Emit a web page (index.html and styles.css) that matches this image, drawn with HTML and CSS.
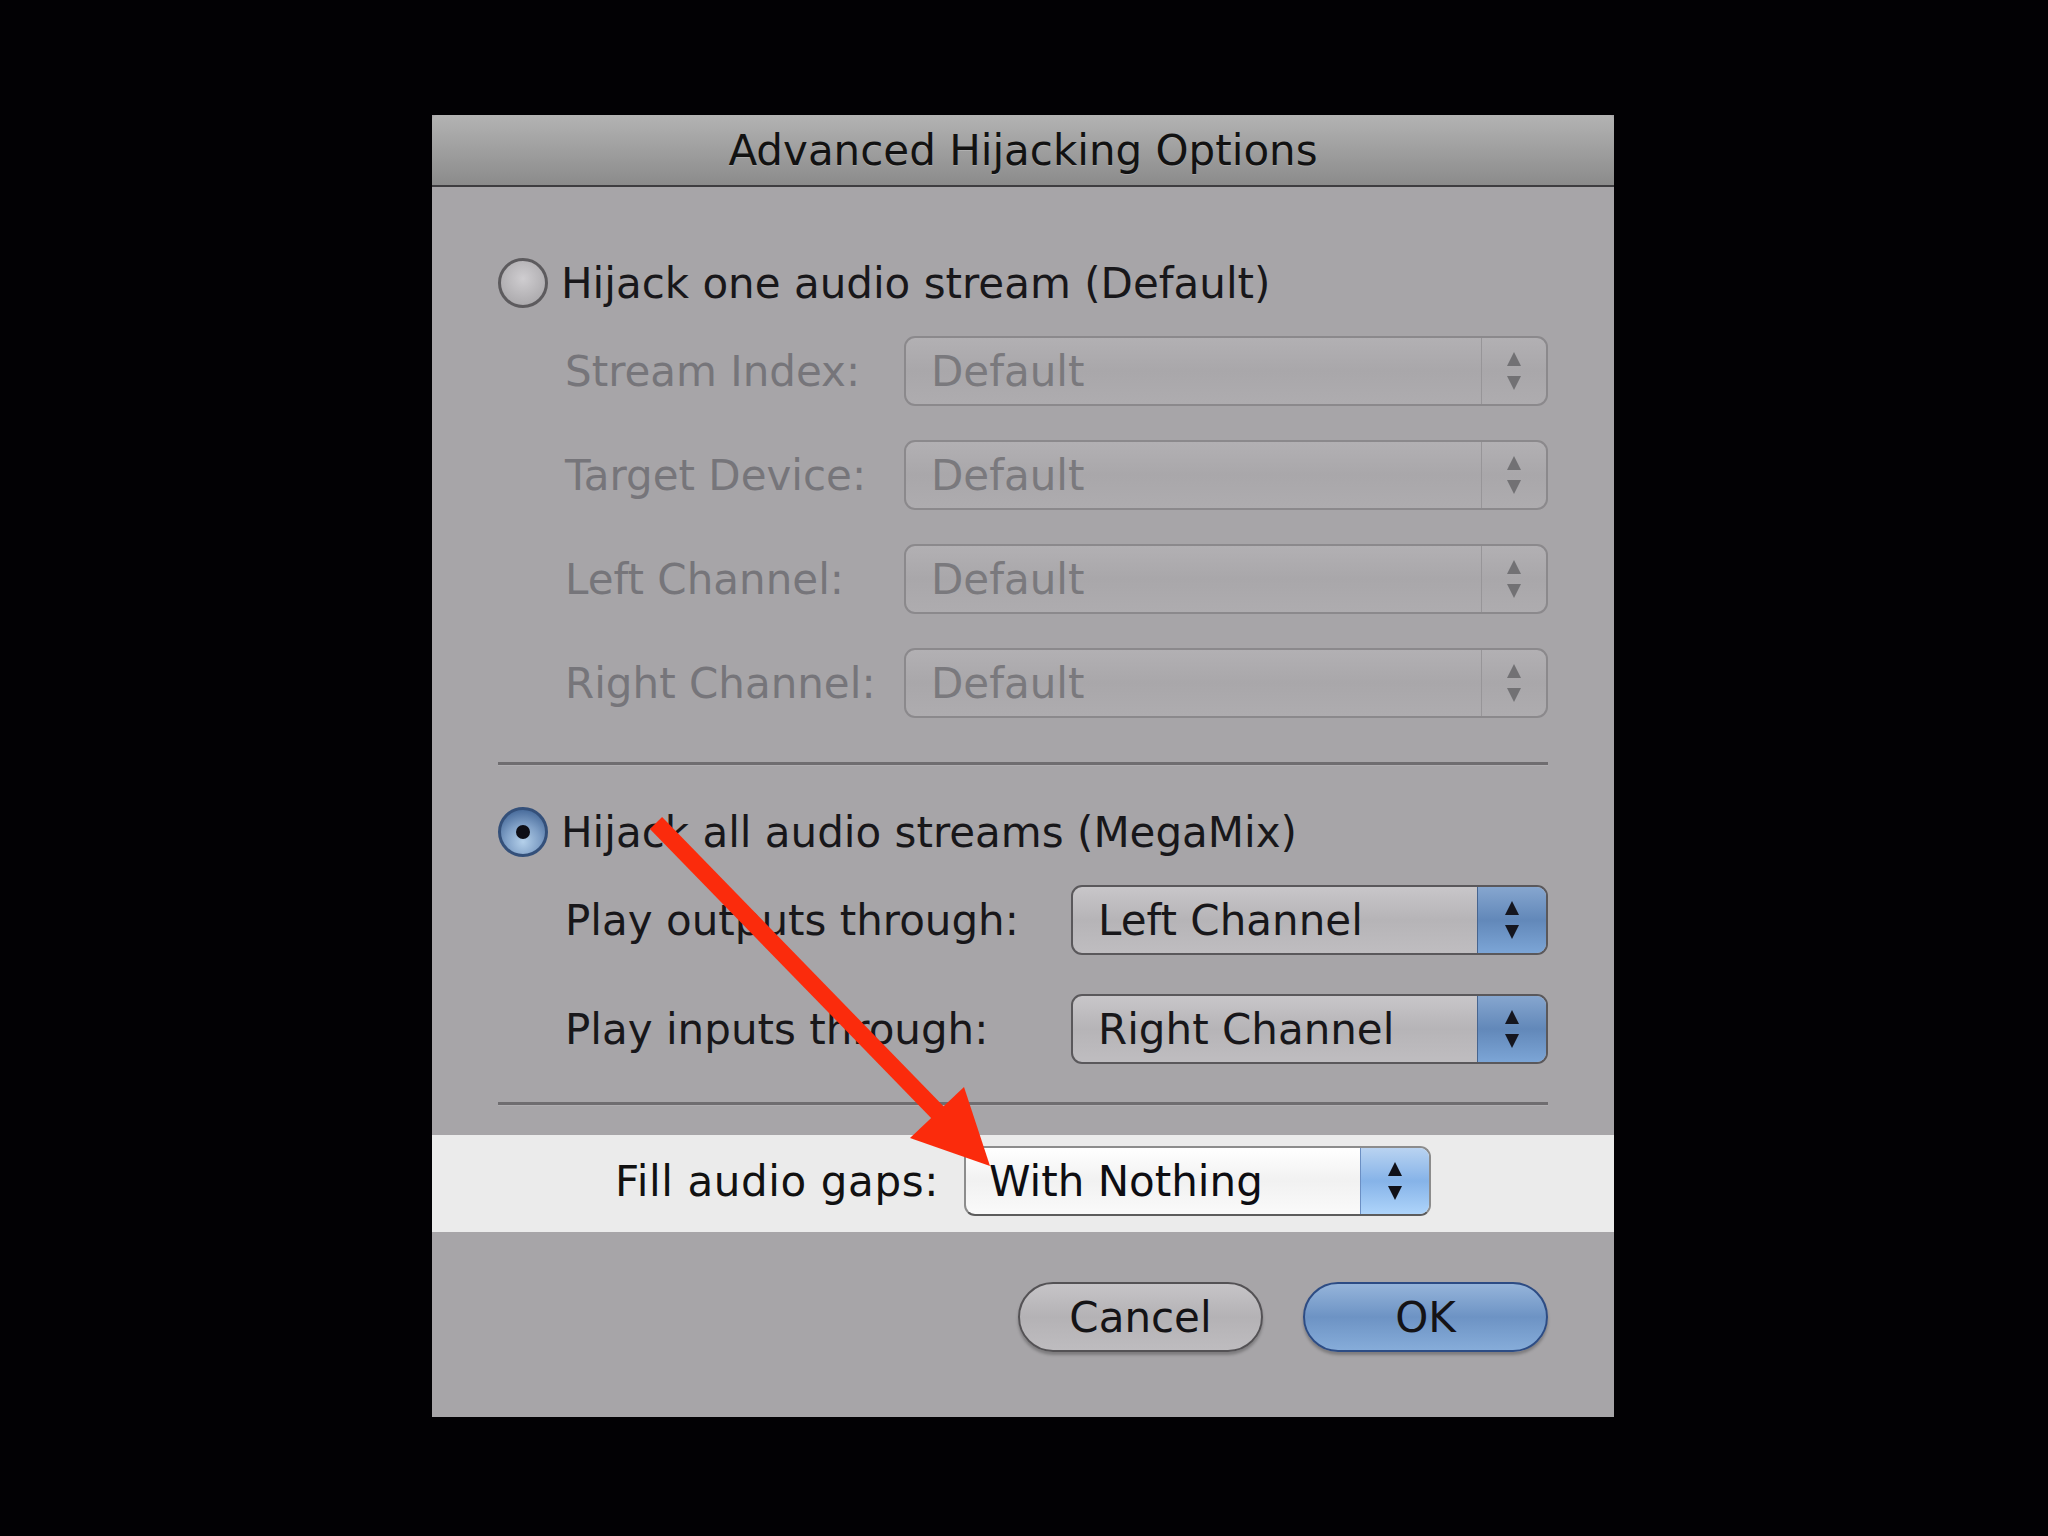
FILE: index.html
```html
<!DOCTYPE html>
<html lang="en">
<head>
    <meta charset="UTF-8">
    <title>Advanced Hijacking Options</title>
    <link rel="stylesheet" href="styles.css">
</head>
<body>
    <div class="dialog">
        <div class="titlebar">Advanced Hijacking Options</div>

        <div class="content">
            <div class="option">
                <span class="radio"></span>
                <span class="option-text">Hijack one audio stream (Default)</span>
            </div>

            <div class="fields fields-one">
                <label class="field-label disabled-text">Stream Index:</label>
                <div class="popup disabled">
                    <span class="popup-value">Default</span>
                    <span class="popup-arrows"><svg width="16" height="44" viewBox="0 0 16 44"><polygon points="8,3 15,17 1,17"/><polygon points="1,27 15,27 8,41"/></svg></span>
                </div>

                <label class="field-label disabled-text">Target Device:</label>
                <div class="popup disabled">
                    <span class="popup-value">Default</span>
                    <span class="popup-arrows"><svg width="16" height="44" viewBox="0 0 16 44"><polygon points="8,3 15,17 1,17"/><polygon points="1,27 15,27 8,41"/></svg></span>
                </div>

                <label class="field-label disabled-text">Left Channel:</label>
                <div class="popup disabled">
                    <span class="popup-value">Default</span>
                    <span class="popup-arrows"><svg width="16" height="44" viewBox="0 0 16 44"><polygon points="8,3 15,17 1,17"/><polygon points="1,27 15,27 8,41"/></svg></span>
                </div>

                <label class="field-label disabled-text">Right Channel:</label>
                <div class="popup disabled">
                    <span class="popup-value">Default</span>
                    <span class="popup-arrows"><svg width="16" height="44" viewBox="0 0 16 44"><polygon points="8,3 15,17 1,17"/><polygon points="1,27 15,27 8,41"/></svg></span>
                </div>
            </div>

            <div class="separator"></div>

            <div class="option option-two">
                <span class="radio checked"><span class="radio-dot"></span></span>
                <span class="option-text">Hijack all audio streams (MegaMix)</span>
            </div>

            <div class="fields fields-all">
                <label class="field-label">Play outputs through:</label>
                <div class="popup">
                    <span class="popup-value">Left Channel</span>
                    <span class="popup-arrows"><svg width="16" height="44" viewBox="0 0 16 44"><polygon points="8,3 15,17 1,17"/><polygon points="1,27 15,27 8,41"/></svg></span>
                </div>

                <label class="field-label">Play inputs through:</label>
                <div class="popup">
                    <span class="popup-value">Right Channel</span>
                    <span class="popup-arrows"><svg width="16" height="44" viewBox="0 0 16 44"><polygon points="8,3 15,17 1,17"/><polygon points="1,27 15,27 8,41"/></svg></span>
                </div>
            </div>

            <div class="separator separator-two"></div>
        </div>

        <!-- highlighted strip, not dimmed -->
        <div class="gaps-band">
            <label class="field-label gaps-label">Fill audio gaps:</label>
            <div class="popup bright">
                <span class="popup-value">With Nothing</span>
                <span class="popup-arrows"><svg width="16" height="44" viewBox="0 0 16 44"><polygon points="8,3 15,17 1,17"/><polygon points="1,27 15,27 8,41"/></svg></span>
            </div>
        </div>

        <div class="buttons">
            <button class="button cancel" type="button">Cancel</button>
            <button class="button ok" type="button">OK</button>
        </div>

        <!-- red annotation arrow drawn over the dialog -->
        <svg class="annotation" width="1182" height="1302" viewBox="0 0 1182 1302">
            <line x1="224" y1="708" x2="512" y2="1004" stroke="#fb2b0c" stroke-width="17"/>
            <polygon points="558,1051 532,972 478,1023" fill="#fb2b0c"/>
        </svg>
    </div>
</body>
</html>
```

FILE: styles.css
```css
body {
    margin: 0;
    padding: 0;
    background: #020104;
    font-family: "DejaVu Sans", "Liberation Sans", sans-serif;
    font-size: 42px;
    color: #18171a;
}

.dialog {
    position: relative;
    box-sizing: border-box;
    width: 1182px;
    height: 1302px;
    margin: 115px 0 0 432px;
    background: #a7a5a8;
}

.titlebar {
    height: 70px;
    border-bottom: 2px solid #3e3d40;
    background: linear-gradient(#b3b3b3, #a3a3a3 40%, #8b8b8b);
    border-radius: 5px 5px 0 0;
    display: flex;
    align-items: center;
    justify-content: center;
    color: #121212;
    text-shadow: 0 1px 0 rgba(255, 255, 255, 0.2);
}

.content {
    padding: 71px 66px 30px 66px;
}

.option {
    display: flex;
    align-items: center;
    gap: 13px;
    height: 50px;
}

.option-two {
    margin-top: 42px;
}

.radio {
    box-sizing: border-box;
    width: 50px;
    height: 50px;
    border-radius: 50%;
    border: 3px solid #5d5b5e;
    background: radial-gradient(circle at 50% 40%, #cfcdd0, #b4b2b5 60%, #a3a1a4);
    display: flex;
    align-items: center;
    justify-content: center;
}

.radio.checked {
    border-color: #34507a;
    background: radial-gradient(circle at 50% 72%, #b4d0ea, #7f9fc6 45%, #4d709f 80%, #3e6090);
}

.radio-dot {
    width: 14px;
    height: 14px;
    border-radius: 50%;
    background: #0e0e16;
}

.fields {
    display: grid;
    align-items: center;
    margin-top: 28px;
    padding-left: 67px;
}

.fields-one {
    grid-template-columns: 339px 1fr;
    row-gap: 34px;
}

.fields-all {
    grid-template-columns: 506px 1fr;
    row-gap: 39px;
}

.field-label {
    white-space: nowrap;
}

.disabled-text {
    color: #76757a;
}

.separator {
    height: 3px;
    margin-top: 44px;
    background: #6f6d70;
    box-shadow: 0 1px 0 #b0aeb1;
}

.separator-two {
    margin-top: 38px;
}

.popup {
    box-sizing: border-box;
    height: 70px;
    display: flex;
    align-items: stretch;
    border: 2px solid #5a585b;
    border-radius: 11px;
    background: linear-gradient(#c8c6c9, #b6b4b7 50%, #bfbdc0);
    color: #18171a;
    overflow: hidden;
}

.popup-value {
    flex: 1;
    display: flex;
    align-items: center;
    padding-left: 25px;
    white-space: nowrap;
}

.popup-arrows {
    width: 68px;
    display: flex;
    align-items: center;
    justify-content: center;
    border-left: 1px solid #46648f;
    background: linear-gradient(#86a6cf, #6288b9 50%, #7ca5d6);
}

.popup-arrows svg {
    fill: #15161f;
}

.popup.disabled {
    border-color: #8b898c;
    background: linear-gradient(#b2b0b3, #a9a7aa 50%, #aeacaf);
    color: #7a797d;
}

.popup.disabled .popup-arrows {
    width: 64px;
    border-left: 1px solid #979598;
    background: none;
}

.popup.disabled .popup-arrows svg {
    fill: #727174;
}

.gaps-band {
    height: 97px;
    box-sizing: border-box;
    padding: 11px 0 16px;
    background: #ebebeb;
    display: flex;
    align-items: center;
    justify-content: center;
    gap: 25px;
    color: #111;
}

.gaps-label {
    letter-spacing: 0.6px;
}

.popup.bright {
    width: 467px;
    border-color: #8c8c8c;
    border-bottom-color: #5c5c5c;
    background: linear-gradient(#ffffff, #f1f1f1 50%, #fafafa);
    color: #0d0d12;
}

.popup.bright .popup-value {
    padding-left: 23px;
}

.popup.bright .popup-arrows {
    width: 68px;
    border-left: 1px solid #6b8fc4;
    background: linear-gradient(#b9d3f1, #86b3e8 50%, #aed4fa);
}

.popup.bright .popup-arrows svg {
    fill: #0f1018;
}

.buttons {
    display: flex;
    justify-content: flex-end;
    gap: 40px;
    padding: 50px 66px 0 0;
}

.button {
    box-sizing: border-box;
    width: 245px;
    height: 70px;
    border-radius: 35px;
    font-family: "DejaVu Sans", "Liberation Sans", sans-serif;
    font-size: 42px;
    color: #141316;
    padding: 0;
    box-shadow: 0 3px 3px rgba(0, 0, 0, 0.25);
}

.button.cancel {
    border: 2px solid #545255;
    background: linear-gradient(#c6c4c7, #b4b2b5 50%, #bebcbf);
}

.button.ok {
    border: 2px solid #2d4c84;
    background: linear-gradient(#95b4da, #6d93c4 50%, #86acd9);
}

.annotation {
    position: absolute;
    left: 0;
    top: 0;
    pointer-events: none;
}
```
